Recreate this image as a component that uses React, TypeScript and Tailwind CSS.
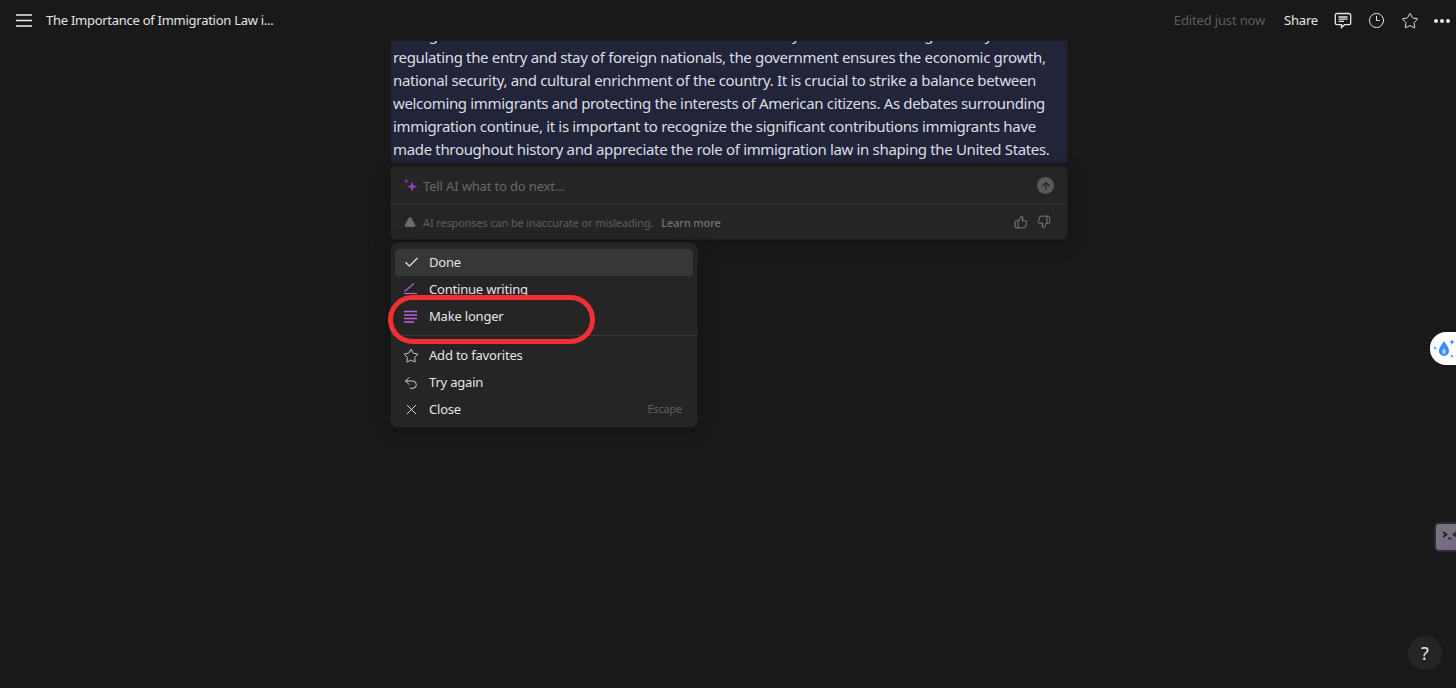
import React from 'react';
import { Check, Star, Undo2, X, ThumbsUp, ThumbsDown, ArrowUp, TriangleAlert, Clock3 } from 'lucide-react';

const lines = [
  'Immigration law is a central element of the American society. It is formed through law. By',
  'regulating the entry and stay of foreign nationals, the government ensures the economic growth,',
  'national security, and cultural enrichment of the country. It is crucial to strike a balance between',
  'welcoming immigrants and protecting the interests of American citizens. As debates surrounding',
  'immigration continue, it is important to recognize the significant contributions immigrants have',
  'made throughout history and appreciate the role of immigration law in shaping the United States.',
];

const Sparkle = () => (
  <svg width="15" height="15" viewBox="0 0 14 14" fill="#8f3fc0">
    <path d="M8.5 3 L9.8 6.7 L13.5 8 L9.8 9.3 L8.5 13 L7.2 9.3 L3.5 8 L7.2 6.7 Z" />
    <path d="M3 0.5 L3.6 2.4 L5.5 3 L3.6 3.6 L3 5.5 L2.4 3.6 L0.5 3 L2.4 2.4 Z" />
  </svg>
);

const PenLine = () => (
  <svg width="15" height="15" viewBox="0 0 15 15" fill="none" stroke="#b565d8" strokeWidth="1.2">
    <path d="M1.5 9.5 L11 1.5" />
    <path d="M1 11.5 H14" />
  </svg>
);

const LongerLines = () => (
  <svg width="15" height="13" viewBox="0 0 15 13" fill="none" stroke="#b565d8" strokeWidth="1.3">
    <path d="M1 1.5 H14 M1 5 H14 M1 8.5 H14 M1 12 H11" />
  </svg>
);

const Comment = () => (
  <svg width="18" height="18" viewBox="0 0 18 18" fill="none" stroke="#e6e6e6" strokeWidth="1.3">
    <path d="M3 1.5 H15 A1.7 1.7 0 0 1 16.7 3.2 V11 A1.7 1.7 0 0 1 15 12.7 H10.5 L7.5 15.5 V12.7 H3 A1.7 1.7 0 0 1 1.3 11 V3.2 A1.7 1.7 0 0 1 3 1.5 Z" />
    <path d="M4.5 5 H13.5 M4.5 7.2 H13.5 M4.5 9.4 H10" />
  </svg>
);

const Drop = () => (
  <svg width="26" height="24" viewBox="0 0 26 24" fill="#3b8bf0">
    <path d="M13 4 C15.5 8 18 10.5 18 14 A5 5 0 0 1 8 14 C8 10.5 10.5 8 13 4 Z" />
    <path d="M13 11 C14 12.5 15 13.5 15 15 A2 2 0 0 1 11 15 C11 13.5 12 12.5 13 11 Z" fill="#9cc6f7" />
    <path d="M21 2 L21.8 4.2 L24 5 L21.8 5.8 L21 8 L20.2 5.8 L18 5 L20.2 4.2 Z" />
    <path d="M4 9 L4.6 10.4 L6 11 L4.6 11.6 L4 13 L3.4 11.6 L2 11 L3.4 10.4 Z" />
    <path d="M21 17 L21.5 18.5 L23 19 L21.5 19.5 L21 21 L20.5 19.5 L19 19 L20.5 18.5 Z" />
  </svg>
);

const Face = () => (
  <svg width="26" height="26" viewBox="0 0 26 26" fill="none" stroke="#1d1d1d" strokeWidth="1.6">
    <path d="M7 8 L10.5 10.5 L7 13" />
    <path d="M12 14.5 H15.5" />
    <path d="M21 8 L17.5 10.5 L21 13" />
  </svg>
);

const MenuItem = ({ icon, label, active, hint }: { icon: React.ReactNode; label: string; active?: boolean; hint?: string }) => (
  <div className={`mx-1 flex h-[27px] items-center rounded-[4px] pl-2 pr-[11px] ${active ? 'bg-[#373737]' : ''}`}>
    <span className="flex w-[26px] shrink-0 items-center">{icon}</span>
    <span className="text-[13px] tracking-[-0.2px] text-[#e3e3e3]">{label}</span>
    {hint && <span className="ml-auto text-[11px] tracking-[-0.2px] text-[#5f5f5f]">{hint}</span>}
  </div>
);

const App = () => {
  return (
    <div className="relative flex h-[688px] w-[1456px] flex-col overflow-hidden bg-[#191919] font-['Noto_Sans',sans-serif]">
      <header className="flex h-[41px] shrink-0 items-center bg-[#191919] pl-4 pr-[6px]">
        <svg width="16" height="13" viewBox="0 0 16 13" stroke="#ededed" strokeWidth="1.4">
          <path d="M0 1 H16 M0 6.5 H16 M0 12 H16" />
        </svg>
        <span className="ml-[14px] text-[13px] tracking-[-0.27px] text-[#e3e3e3]">The Importance of Immigration Law i...</span>
        <span className="ml-auto text-[13px] tracking-[-0.15px] text-[#5c5c5c]">Edited just now</span>
        <span className="ml-[19px] text-[13px] tracking-[-0.2px] text-[#e6e6e6]">Share</span>
        <span className="ml-[16px]"><Comment /></span>
        <span className="ml-[16px]"><Clock3 size={17} strokeWidth={1.4} color="#e6e6e6" /></span>
        <span className="ml-[16px]"><Star size={18} strokeWidth={1.3} color="#e6e6e6" /></span>
        <span className="ml-[15px] flex gap-[2px]">
          <i className="h-1 w-1 rounded-full bg-[#e6e6e6]" />
          <i className="h-1 w-1 rounded-full bg-[#e6e6e6]" />
          <i className="h-1 w-1 rounded-full bg-[#e6e6e6]" />
        </span>
      </header>

      <main className="flex-1 overflow-hidden">
        <div className="ml-[391px] w-[676px]">
          <div className="-mt-[18px] rounded-b-[3px] bg-[#22253a] pl-[2px] pb-[2px] text-[15px] leading-[23px] tracking-[-0.337px] text-[#dcdde3]">
            {lines.map((line) => (
              <div key={line} className="whitespace-nowrap">{line}</div>
            ))}
          </div>

          <div className="mt-[4px] rounded-[4px] bg-[#252525] shadow-[0_0_0_1px_#1d1d1d,0_4px_16px_#141414]">
            <div className="flex h-[38px] items-center border-b border-[#2f2f2f] pl-[12px] pr-[13px]">
              <Sparkle />
              <span className="ml-[5px] mt-[2px] text-[13px] tracking-[-0.15px] text-[#686868]">Tell AI what to do next...</span>
              <span className="ml-auto flex h-[17px] w-[17px] items-center justify-center rounded-full bg-[#5a5a5a]">
                <ArrowUp size={12} strokeWidth={2.2} color="#252525" />
              </span>
            </div>
            <div className="flex h-[34px] items-center pl-[13px] pr-[16px]">
              <TriangleAlert size={12} fill="#6b6b6b" color="#6b6b6b" />
              <span className="ml-[7px] mt-[2px] text-[11px] tracking-[-0.14px] text-[#5f5f5f]">AI responses can be inaccurate or misleading.</span>
              <span className="ml-[8px] mt-[2px] text-[11px] font-medium tracking-[-0.15px] text-[#747474]">Learn more</span>
              <ThumbsUp className="ml-auto" size={14} strokeWidth={1.2} color="#a0a0a0" />
              <ThumbsDown className="ml-[9px]" size={14} strokeWidth={1.2} color="#a0a0a0" />
            </div>
          </div>

          <div className="mt-[4px] w-[306px] rounded-[6px] bg-[#252525] pt-[6px] pb-[4px] shadow-[0_0_0_1px_#1d1d1d,0_4px_16px_#141414]">
            <MenuItem active icon={<Check size={17} strokeWidth={1.6} color="#f0f0f0" />} label="Done" />
            <MenuItem icon={<PenLine />} label="Continue writing" />
            <MenuItem icon={<LongerLines />} label="Make longer" />
            <div className="mt-[5px] mb-[6px] h-px bg-[#363636]" />
            <MenuItem icon={<Star size={16} strokeWidth={1.3} color="#e6e6e6" />} label="Add to favorites" />
            <MenuItem icon={<Undo2 size={16} strokeWidth={1.3} color="#e6e6e6" />} label="Try again" />
            <MenuItem icon={<X size={17} strokeWidth={1.3} color="#e6e6e6" />} label="Close" hint="Escape" />
          </div>
        </div>
      </main>

      {/* annotation ring over the menu */}
      <div className="absolute left-[388px] top-[295px] h-[49px] w-[207px] rounded-[25px] border-[5px] border-[#f22f35]" />

      {/* browser extension widgets on the right edge */}
      <div className="absolute left-[1430px] top-[332px] flex h-[33px] w-[40px] items-center rounded-l-[16px] bg-white pl-[1px]">
        <Drop />
      </div>
      <div className="absolute left-[1434px] top-[522px] h-[30px] w-[30px] rounded-[5px] border-[2px] border-[#2b2a3a] bg-gradient-to-br from-[#77757f] via-[#77707f] to-[#7a5a90]">
        <Face />
      </div>
      <div className="absolute left-[1408px] top-[636px] flex h-[34px] w-[34px] items-center justify-center rounded-full bg-[#252525] text-[18px] text-[#e6e6e6]">
        ?
      </div>
    </div>
  );
};

export default App;
